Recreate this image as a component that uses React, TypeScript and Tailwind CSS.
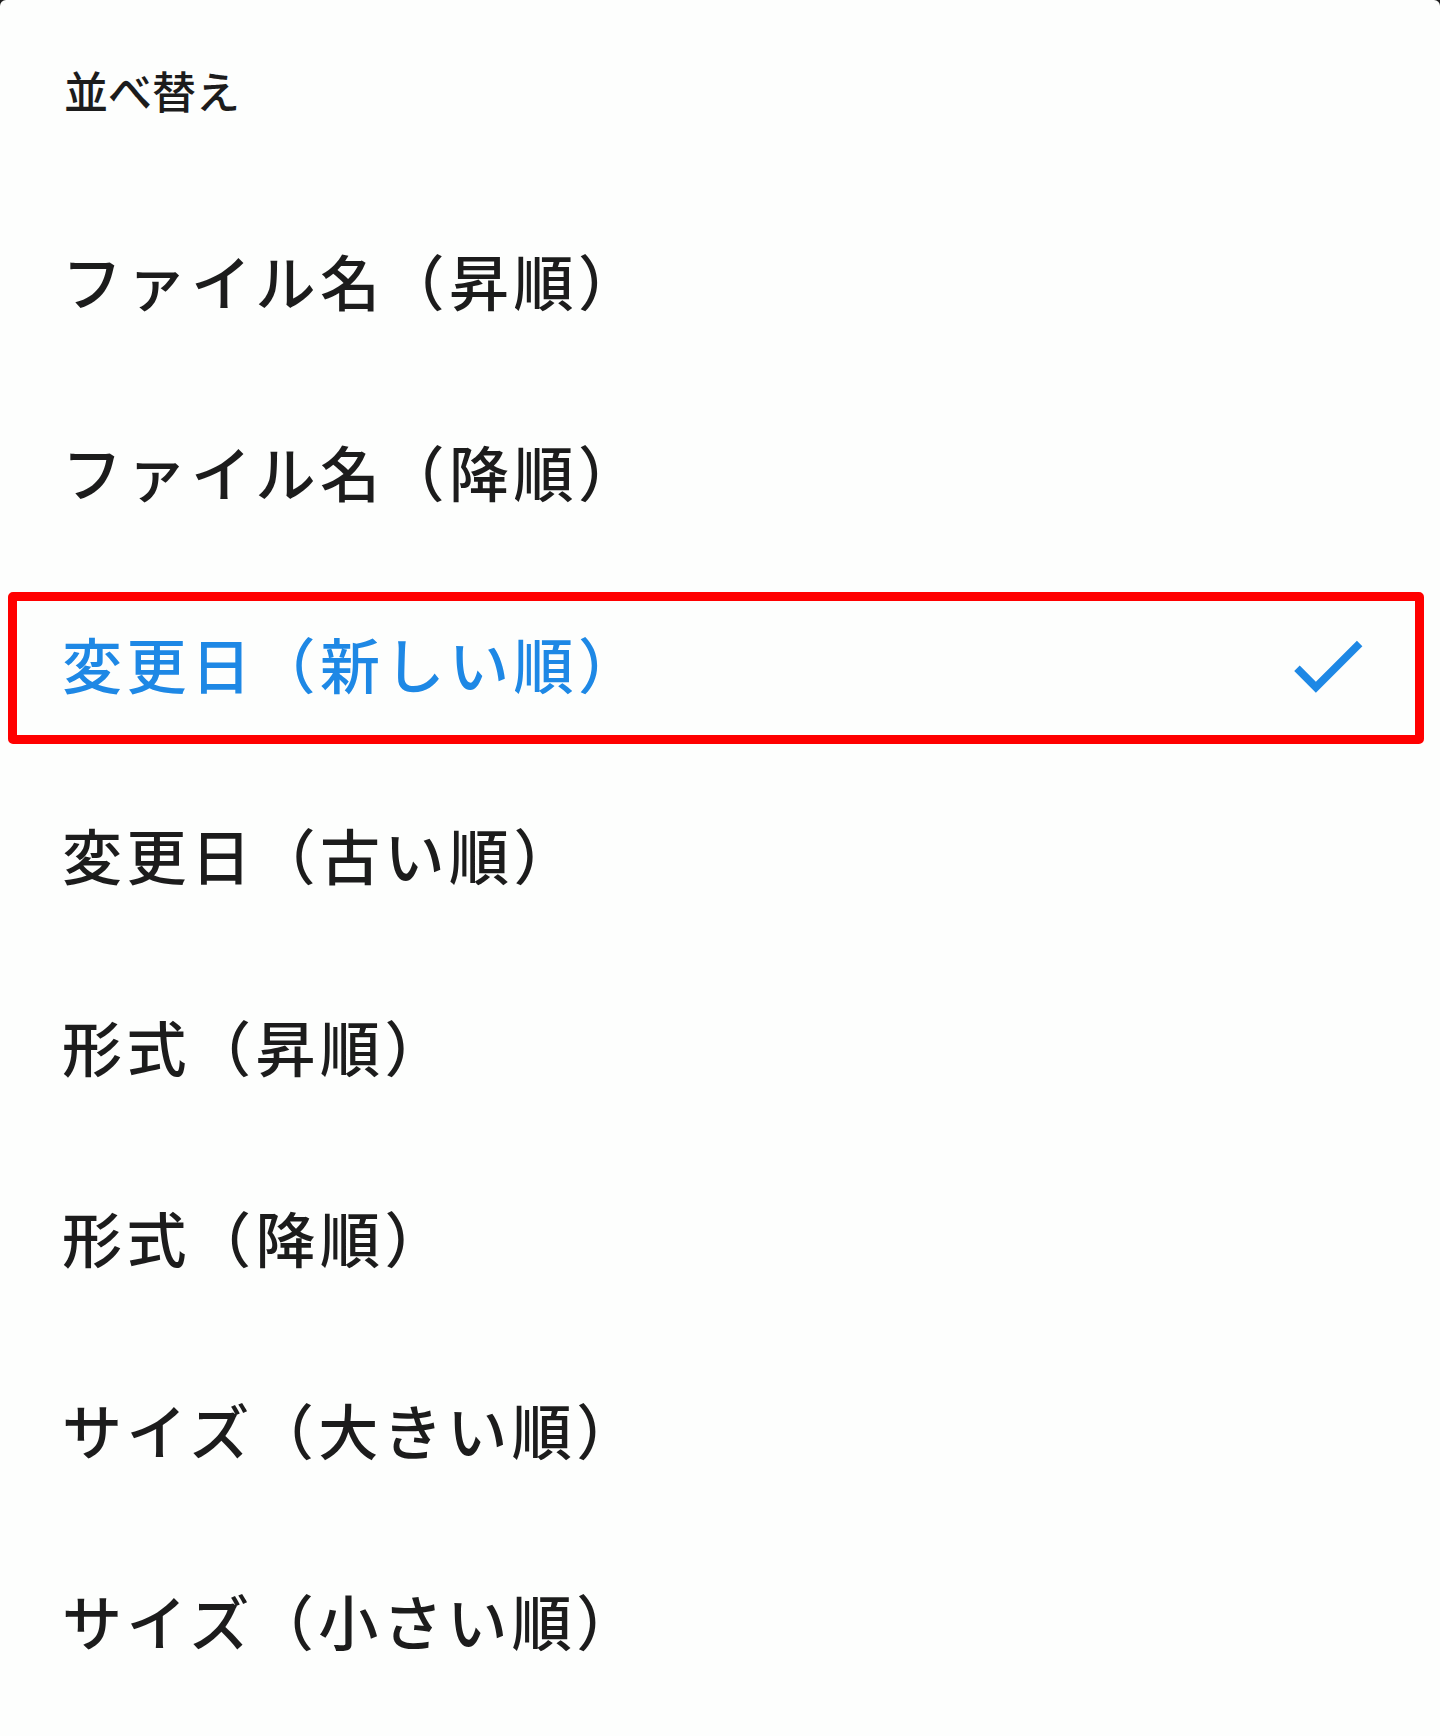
import React from "react";

interface SortOption {
  label: string;
  selected?: boolean;
}

const options: SortOption[] = [
  { label: "ファイル名（昇順）" },
  { label: "ファイル名（降順）" },
  { label: "変更日（新しい順）", selected: true },
  { label: "変更日（古い順）" },
  { label: "形式（昇順）" },
  { label: "形式（降順）" },
  { label: "サイズ（大きい順）" },
  { label: "サイズ（小さい順）" },
];

function CheckIcon() {
  // material "check"
  return (
    <svg viewBox="0 0 24 24" className="h-[93px] w-[93px] fill-[#1e88e5]">
      <path d="M9 16.17 4.83 12l-1.42 1.41L9 19 21 7l-1.41-1.41z" />
    </svg>
  );
}

function OptionRow({ label, selected }: SortOption) {
  return (
    <div className="relative flex h-[191.5px] items-center justify-between pl-[62px] pr-[66px]">
      <span
        className={`-mt-[5px] text-[60px] leading-none font-medium tracking-[4.5px] ${
          selected ? "text-[#1e88e5]" : "text-[#1c1c1c]"
        }`}
      >
        {label}
      </span>
      {selected && <CheckIcon />}
      {selected && (
        <div className="pointer-events-none absolute top-[22px] right-[16px] bottom-[17px] left-[8px] rounded-[5px] border-[9px] border-[#ff0000]" />
      )}
    </div>
  );
}

export default function App() {
  return (
    <div
      className="min-h-[1736px] w-[1440px] bg-[#1c1c1c]"
      style={{ fontFamily: '"Noto Sans CJK JP", "Noto Sans", sans-serif' }}
    >
      <div className="min-h-[1736px] rounded-t-[6px] bg-[#fdfefd]">
        <div className="flex h-[186.5px] items-start pt-[68px] pl-[64px]">
          <h2 className="text-[44px] leading-none font-medium text-[#1c1c1c]">
            並べ替え
          </h2>
        </div>
        <div className="flex flex-col">
          {options.map((o) => (
            <OptionRow key={o.label} label={o.label} selected={o.selected} />
          ))}
        </div>
      </div>
    </div>
  );
}
